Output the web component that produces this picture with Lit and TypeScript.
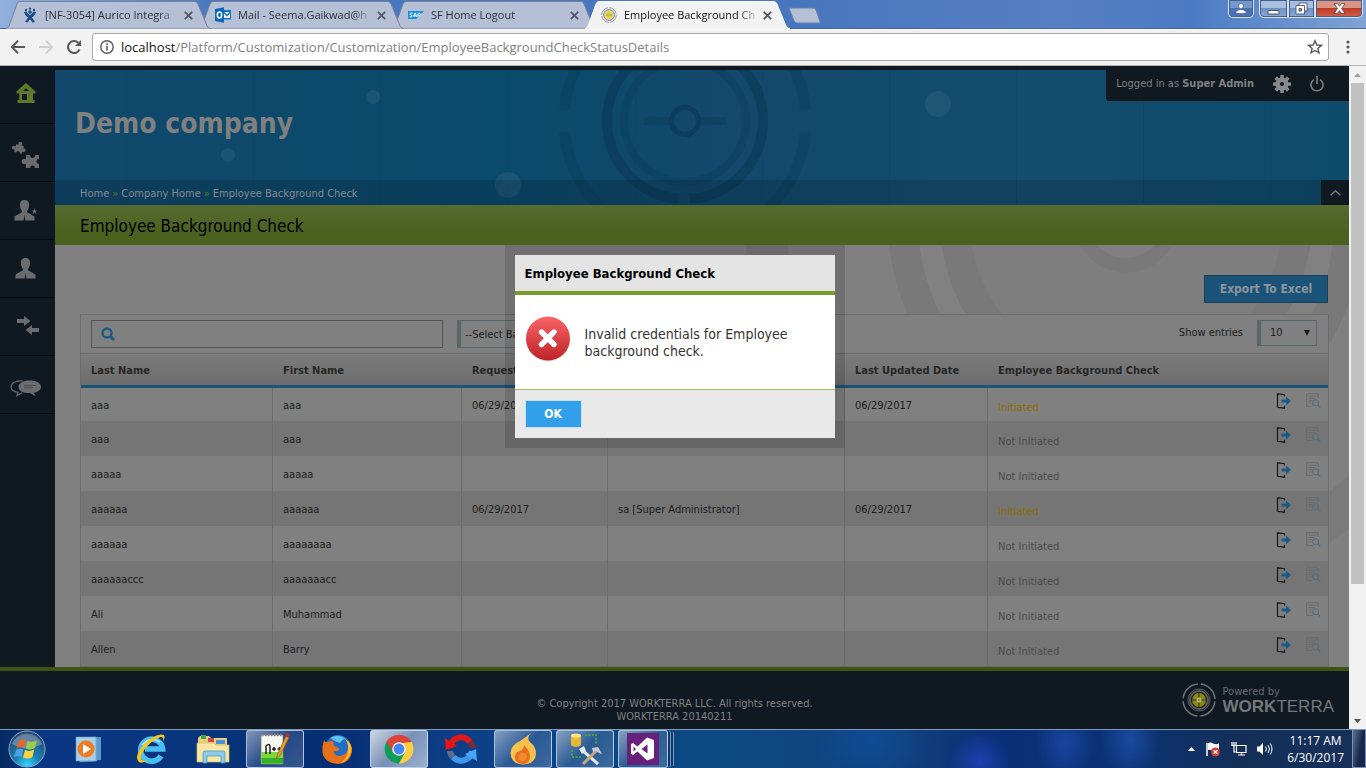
import { LitElement, html, css, svg } from "lit";
import { customElement, property } from "lit/decorators.js";
import { classMap } from "lit/directives/class-map.js";

interface Row {
  last: string;
  first: string;
  requested?: string;
  by?: string;
  updated?: string;
  initiated?: boolean;
}

const ROWS: Row[] = [
  { last: "aaa", first: "aaa", requested: "06/29/2017", by: "sa [Super Administrator]", updated: "06/29/2017", initiated: true },
  { last: "aaa", first: "aaa" },
  { last: "aaaaa", first: "aaaaa" },
  { last: "aaaaaa", first: "aaaaaa", requested: "06/29/2017", by: "sa [Super Administrator]", updated: "06/29/2017", initiated: true },
  { last: "aaaaaa", first: "aaaaaaaa" },
  { last: "aaaaaaccc", first: "aaaaaaacc" },
  { last: "Ali", first: "Muhammad" },
  { last: "Allen", first: "Barry" },
];

/* ---------- icons ---------- */

const jiraIcon = html`<svg width="16" height="16" viewBox="0 0 16 16" fill="#1f4f86">
  <circle cx="4" cy="3" r="1.2"/><circle cx="8" cy="1.6" r="1.2"/><circle cx="12" cy="3" r="1.2"/>
  <circle cx="8" cy="5" r="1.7"/>
  <path d="M2 5l2.200-.6L8 8.200l3.800-3.800L14 5c-.6 2.600-2.300 4.300-4 5.500L13 15l-2.600.6L8 12.300 5.600 15.600 3 15l3-4.500C4.300 9.300 2.600 7.600 2 5z"/>
</svg>`;

const outlookIcon = html`<svg width="16" height="16" viewBox="0 0 16 16">
  <path d="M8 3h8v9.500H8z" fill="#1273c4"/><path d="M9 5h6v6H9z" fill="#e6eef8"/>
  <path d="M9 5.500l3 3 3-3" fill="none" stroke="#1273c4" stroke-width="1.300"/>
  <path d="M0 2l9-1.800v15.600L0 14z" fill="#0a68bb"/>
  <ellipse cx="4.500" cy="8" rx="2.200" ry="2.900" fill="none" stroke="#fff" stroke-width="1.500"/>
</svg>`;

const sapIcon = html`<svg width="16" height="16" viewBox="0 0 16 16">
  <path d="M0 4h16l-7.500 8H0z" fill="#1490dc"/>
  <path d="M4.500 6.200H2.600Q1.400 6.400 2.200 7.600l1.600.7q.6 1.300-.6 1.500H1.500M5.400 10l1.400-3.800h.6L8.800 10M5.900 8.900h2.200M10 10V6.300h1.300q1.500.2 1.200 1.300-.3.900-2.300.8" fill="none" stroke="#fff" stroke-width="1"/>
</svg>`;

const targetIcon = html`<svg width="16" height="16" viewBox="0 0 16 16">
  <circle cx="8" cy="8" r="7.300" fill="none" stroke="#9b9b9b" stroke-width="1" stroke-dasharray="10.400 1"/>
  <circle cx="8" cy="8" r="5.400" fill="#d4d4d4" stroke="#8a8a8a" stroke-width="1"/>
  <circle cx="8" cy="8" r="3.500" fill="#e8dc1c"/>
  <circle cx="8" cy="8" r="1.100" fill="#fff" stroke="#9a9340" stroke-width=".7"/>
  <path d="M5 8h1.600M9.400 8H11" stroke="#8a8430" stroke-width=".8"/>
</svg>`;

const closeIcon = html`<svg width="9" height="9" viewBox="0 0 9 9"><path d="M.8.8l7.400 7.400M8.200.8L.8 8.200" stroke="#505561" stroke-width="1.700"/></svg>`;

const backIcon = (c: string, flip = false) => html`<svg width="14" height="14" viewBox="0 0 14 14">
  <path d="${flip ? "M0 7h13M7 .8L13.200 7 7 13.200" : "M14 7H1M7 .8L.8 7 7 13.200"}" fill="none" stroke="${c}" stroke-width="2"/></svg>`;

const reloadIcon = html`<svg width="14" height="14" viewBox="0 0 14 14">
  <path d="M12.600 9.300A6 6 0 1 1 11.300 2.800" fill="none" stroke="#585858" stroke-width="2"/><path d="M14 0v6H8z" fill="#585858"/></svg>`;

const infoIcon = html`<svg width="14" height="14" viewBox="0 0 14 14"><circle cx="7" cy="7" r="6.200" fill="none" stroke="#5a5a5a" stroke-width="1.400"/>
  <path d="M7 6v4.500M7 3.200v1.700" stroke="#5a5a5a" stroke-width="1.600"/></svg>`;

const starIcon = html`<svg width="16" height="16" viewBox="0 0 16 16"><path d="M8 1.700l1.800 4.300 4.600.4-3.500 3 1.100 4.500L8 11.500l-4 2.400 1.100-4.500-3.500-3 4.600-.4z" fill="none" stroke="#5a5a5a" stroke-width="1.400"/></svg>`;

const menuDots = html`<svg width="4" height="14" viewBox="0 0 4 14" fill="#5a5a5a"><circle cx="2" cy="2" r="1.600"/><circle cx="2" cy="7" r="1.600"/><circle cx="2" cy="12" r="1.600"/></svg>`;

const homeIcon = html`<svg width="20" height="24" viewBox="0 0 20 24">
  <path d="M10 0l9.500 8.400v2H17V17h1.500v3h-17v-3H3.200v-6.600H.5v-2zM6 11v6h5v-6zm1-3h6L10 5.200z" fill="#5d7a2c" fill-rule="evenodd"/></svg>`;

const puzzleIcon = html`<svg width="28" height="32" viewBox="0 0 28 32" fill="#6a6c6f">
  <g transform="rotate(14 7 12)"><path d="M3 8h8v8H3z"/><circle cx="7" cy="6.800" r="1.900"/><circle cx="1.800" cy="12" r="1.900"/><circle cx="11.800" cy="12" r="1.900"/><circle cx="7" cy="16" r="1.800" fill="#101922"/></g>
  <path d="M14 18h13v13H14z"/><circle cx="12.400" cy="24.500" r="2.700"/><circle cx="20.500" cy="18.600" r="2.500" fill="#101922"/><circle cx="26.800" cy="24.500" r="2.400" fill="#101922"/><circle cx="20.500" cy="30.800" r="2.400" fill="#101922"/></svg>`;

const manPath = svg`<path d="M10.500 0c3 0 4.800 2 4.600 5-.1 2.500-.8 4.500-2 5.800v1.400l7.400 4.400v4h-9.200l-.8-6-.8 6H.5v-4l7.400-4.400v-1.400C6.700 9.500 6 7.500 5.900 5 5.700 2 7.500 0 10.500 0z"/>`;
const manStarIcon = html`<svg width="24" height="21" viewBox="0 0 24 21" fill="#6a6c6f">${manPath}<path d="M20.500 7.600l1 2.600 2.500.1-2 1.700.7 2.500-2.200-1.400-2.200 1.400.7-2.500-2-1.700 2.500-.1z" stroke="#101922" stroke-width=".6"/></svg>`;
const manIcon = html`<svg width="21" height="21" viewBox="0 0 21 21" fill="#6a6c6f">${manPath}</svg>`;
const arrowsIcon = html`<svg width="26" height="21" viewBox="-4 0 26 21" fill="#6a6c6f"><path d="M0 3h7V0l6.500 5L7 10V7H0zM22 12h-7V9l-6.500 5 6.500 5v-3h7z"/></svg>`;
const chatIcon = html`<svg width="31" height="25" viewBox="0 -8 31 25">
  <path d="M13 1C6 .5 1 3 1 7c0 3 3 4.500 7 5.300L7 15.500l5-2.800" fill="none" stroke="#6a6c6f" stroke-width="1.200"/>
  <path d="M19.500.5C26 .5 31 3 31 7c0 3.200-3.600 5-7.500 5.700L26 16.500l-6-3.400C13 13.300 8.500 11 8.500 7S13.500.5 19.500.5z" fill="#6a6c6f"/>
  <path d="M14 5.500h12M14 7.700h9" stroke="#3c434a" stroke-width=".8"/></svg>`;

const gearIcon = html`<svg width="18" height="18" viewBox="0 0 18 18"><g fill="#87898b">
  <circle cx="9" cy="9" r="6.600"/>
  ${[0, 45, 90, 135].map((a) => svg`<rect x="7.200" y="0" width="3.600" height="18" rx=".6" transform="rotate(${a} 9 9)"/>`)}</g>
  <circle cx="9" cy="9" r="2" fill="#101820"/></svg>`;
const powerIcon = html`<svg width="14" height="16" viewBox="0 0 14 16"><path d="M4 3.600a6 6 0 1 0 6 0M7 0v8" fill="none" stroke="#7d8083" stroke-width="1.600"/></svg>`;

const searchIcon = html`<svg width="14" height="14" viewBox="0 0 14 14"><circle cx="6" cy="6" r="4.500" fill="none" stroke="#1b5a84" stroke-width="2.400"/><path d="M9 9l4 4" stroke="#1b5a84" stroke-width="3"/></svg>`;
const sendIcon = html`<svg width="16" height="16" viewBox="0 0 16 16"><path d="M8.500 3.500V1.700L1.500.8v13.500l7 .9v-2.400" fill="none" stroke="#191919" stroke-width="1.200"/>
  <path d="M5.500 6.500H10V3.500L15 8l-5 4.500v-3H5.500z" fill="#1b5a84"/></svg>`;
const reportIcon = html`<svg width="15" height="15" viewBox="0 0 15 15"><path d="M7 13.500H.7V.7h11.400V5M2.500 3.200h8M2.500 5.500h6M2.500 7.700h4M2.500 10h3" fill="none" stroke="#6b6b6b" stroke-width="1"/>
  <circle cx="9.600" cy="9.700" r="3" fill="none" stroke="#5b6c7a" stroke-width="1.100"/><path d="M11.800 11.900l2.500 2.500" stroke="#5b6c7a" stroke-width="1.400"/></svg>`;

const errorIcon = html`<svg width="46" height="46" viewBox="0 0 46 46"><defs><linearGradient id="er" x1="0" y1="0" x2="0" y2="1">
  <stop offset="0" stop-color="#fb6466"/><stop offset="1" stop-color="#bd2328"/></linearGradient></defs>
  <circle cx="23" cy="23.500" r="22" fill="#d9d9d9"/><circle cx="23" cy="22.500" r="22" fill="url(#er)"/>
  <path d="M16.500 16l12.500 12.500M29 16L16.500 28.500" stroke="#fff" stroke-width="5.400" stroke-linecap="round"/></svg>`;

const brandIcon = html`<svg width="34" height="34" viewBox="0 0 34 34" fill="none">
  <circle cx="17" cy="17" r="16" stroke="#6e7276" stroke-width="1.500" stroke-dasharray="22.100 3" stroke-dashoffset="-1.500"/>
  <circle cx="17" cy="17" r="11" stroke="#5e6266" stroke-width="1"/><circle cx="17" cy="17" r="9" stroke="#5b5b5b" stroke-width="2"/>
  <circle cx="17" cy="17" r="7" fill="#8a8a12"/><path d="M17 9v16M9 17h16" stroke="#2d3014" stroke-width="1"/>
  <circle cx="17" cy="17" r="2" fill="#8a8a12" stroke="#cfcfc0" stroke-width="1"/></svg>`;

/* Crosshair emblem of the banner. */
const emblem = (c: string) => svg`
  <g fill="none" stroke="${c}">
    <circle r="13.500" stroke-width="5"/>
    <circle r="61" stroke-width="8" opacity=".35"/>
    <circle r="78" stroke-width="10" stroke-dasharray="234 11" stroke-dashoffset="-5.500" transform="rotate(90)" opacity=".8"/>
    <circle r="121" stroke-width="11" stroke-dasharray="357 23.100" stroke-dashoffset="-11.500" opacity=".45"/>
    <path d="M-41 0h25M16 0h25" stroke-width="8" opacity=".45"/>
  </g>`;

/* ---------- taskbar icons ---------- */

const startOrb = html`<svg width="40" height="38" viewBox="0 0 40 38"><defs><radialGradient id="orb" cx=".5" cy=".95" r=".9">
  <stop offset="0" stop-color="#35d6ff"/><stop offset=".4" stop-color="#1a7fb0"/><stop offset="1" stop-color="#27486f"/></radialGradient></defs>
  <circle cx="20" cy="19" r="18" fill="url(#orb)" stroke="#8aa7c4"/>
  <path d="M5 14a16 16 0 0 1 30 0q-15 8-30 0z" fill="#fff" opacity=".28"/>
  <path d="M11.500 11q4-2.500 7.500-.6l-2 7.600q-4-1.800-7.500.4z" fill="#e9662f"/>
  <path d="M20.500 10.800q4.500 2.200 9.500-.6l-2 7.800q-4.500 2.600-9.300.4z" fill="#9bcb4a"/>
  <path d="M9 20q3.500-2.200 7.300-.5l-2 7.500q-3.500-1.800-7.500.3z" fill="#4ba3e3"/>
  <path d="M18 20q4.500 2.200 9.300-.5l-2 7.700q-4.500 2.500-9.300.3z" fill="#fcd33c"/></svg>`;

const mediaIcon = html`<svg width="28" height="28" viewBox="0 0 28 28"><path d="M8 3l18-1v23l-18 1z" fill="#5b9bcc"/><path d="M5 3l17-1v24l-17 1z" fill="#8cc0e2" stroke="#4a86b3" stroke-width=".6"/>
  <path d="M1 2h20v24H1z" fill="#a9cfe8" stroke="#5d9cc9" stroke-width=".6"/><circle cx="11" cy="14" r="8.500" fill="#f07c22"/><path d="M8 9l8 5-8 5z" fill="#fff"/></svg>`;

const ieIcon = html`<svg width="34" height="34" viewBox="0 0 34 34">
  <path d="M27 24a11 11 0 1 1 1.600-7H11" fill="none" stroke="#48bff2" stroke-width="5.600"/><path d="M8 13q8-9 18-3" fill="none" stroke="#b9ecff" stroke-width="1.500"/>
  <path d="M29 10Q33 2 27 2.500 18 3.500 9 13.500-.5 25 5 30q3 2 9-2-6 2-7-1-1-5 6-12.500Q21 6 27 5q3 0 2 5z" fill="#f8c51c"/></svg>`;

const folderIcon = html`<svg width="34" height="30" viewBox="0 0 34 30"><path d="M2 4l2-2h9l2 2h16v22H2z" fill="#e8cf7f"/><path d="M5 1h5v4H5z" fill="#35a94a"/><path d="M12 4h6v4h-6z" fill="#d34545"/><path d="M20 6h9v4h-9z" fill="#4a90d9"/>
  <path d="M1 9h17l2 2h13v17H1z" fill="#f7e6a6" stroke="#d6b860" stroke-width=".7"/><path d="M7 29V19q0-2 2-2h18q2 0 2 2v10h-4v-7H11v7z" fill="#8fcbe8" stroke="#4d9cc4" stroke-width=".8"/></svg>`;

const nppIcon = html`<svg width="32" height="34" viewBox="0 0 32 34"><path d="M2 3h22v29H2z" fill="#f4f7ee" stroke="#777" stroke-width=".8"/><path d="M2.500 20H24v12H2.500z" fill="#7fd53c"/><path d="M2.500 26H24v5.500H2.500z" fill="#37ae2c"/>
  <path d="M3 3h20" stroke="#888" stroke-width="2.500" stroke-dasharray="1.500 1.500"/>
  <path d="M7 22v-8q3-3 4 0v8M13 17h4M15 15v4M18.500 17h4M20.500 15v4" stroke="#222" stroke-width="1.500" fill="none"/>
  <path d="M17 27l2-6L27 4l3 1.500L21.500 23z" fill="#e59a2e" stroke="#8c5a18" stroke-width=".6"/><path d="M26 4l1.500-3 3.500 1.500L29.800 6z" fill="#b63131"/></svg>`;

const firefoxIcon = html`<svg width="32" height="32" viewBox="0 0 32 32"><circle cx="17" cy="15" r="13" fill="#1f6fc4"/><path d="M9 5q8-5 16 1-4 0-6 4-6-2-10-5z" fill="#5ec1ee"/>
  <path d="M3 7q1 3 4 2 3-2 6 0-2 3 2 5 4 1 3 3-3 2-5 1-1 4 5 5 7 0 9-7 1-6-3-10 8 4 7 13-2 11-14 12Q3 30 1.500 19 1 12 3 7z" fill="#e8701a"/><path d="M24 6q8 5 6 13-3 9-10 11 7-6 7-12 1-7-3-12z" fill="#fbc02d"/></svg>`;

const chromeIcon = html`<svg width="30" height="30" viewBox="-15 -15 30 30"><path d="M0 0L-12.500-7.200A14.500 14.500 0 0 1 12.500-7.200z" fill="#db4437"/><path d="M-12.500-7.200A14.500 14.500 0 0 0 0 14.500L6.500 3 0 0z" fill="#0f9d58"/>
  <path d="M12.700-7A14.500 14.500 0 0 1 0 14.500L6.500 3 3-6z" fill="#ffcd40"/><path d="M-12.500-7.200L-6 3.500 0 0V-7H12.600z" fill="#db4437"/><circle r="6.800" fill="#f1f1f1"/><circle r="5.400" fill="#4285f4"/></svg>`;

const syncIcon = html`<svg width="32" height="32" viewBox="0 0 32 32" fill="none"><path d="M5 15A11 11 0 0 1 25 9" stroke="#e01818" stroke-width="6"/><path d="M25 9q3 3 3 6" stroke="#7a2c34" stroke-width="6"/>
  <path d="M27 18A11 11 0 0 1 8 24" stroke="#3f97ea" stroke-width="6"/><path d="M8 24q-3-3-3-6" stroke="#5d6c82" stroke-width="6"/><path d="M0 5l1 12 11-4z" fill="#f01010"/><path d="M32 28l-1-12-11 5z" fill="#4aa5f5"/></svg>`;

const flameIcon = html`<svg width="28" height="32" viewBox="0 0 28 32"><path d="M22 0q-5 5-1 9 6 5 6 11 0 11-13 11.500Q2 31 1.500 20 2 12 11 8q6-4 11-8z" fill="#f8c14e"/><path d="M15 12q6 6 6 11 0 7-6 8-9 0-9-7 0-5 5-6 4-2 4-6z" fill="#e8701c"/><path d="M12 20q5-1 6 3-1 5-5 5-4-1-4-4 1-3 3-4z" fill="#f08a2c"/></svg>`;

const toolsIcon = html`<svg width="34" height="34" viewBox="0 0 34 34"><path d="M3 3v10q5 4 10 0V3z" fill="#e9b736"/><ellipse cx="8" cy="3.500" rx="5" ry="2" fill="#fbe38c"/>
  <path d="M17 3h11v9M4 18v7h10" stroke="#4eb52c" stroke-width="1.500" stroke-dasharray="2 1.500" fill="none"/>
  <path d="M14 18l16 14" stroke="#dfe6ec" stroke-width="3"/><path d="M28 19L15 32" stroke="#c9a77d" stroke-width="3"/><path d="M11 17l5-3 2 5-4 3z" fill="#e8edf2"/><path d="M24 16l6-1 4 7-3-1-3-2-3 1z" fill="#c3ccd6"/></svg>`;

const vsIcon = html`<svg width="32" height="32" viewBox="0 0 32 32"><path d="M0 0h32v32H0z" fill="#68217a"/><path d="M20 4.500l7 2.500v18l-7 2.500L10.500 18.500 6 22l-2-1.200v-9.600L6 10l4.500 3.500zM6.500 13.500v5L9 16zM20.500 11.500L14.500 16l6 4.500z" fill="#fff" fill-rule="evenodd"/></svg>`;

/* ---------- window frame with tabs and address bar ---------- */

@customElement("browser-chrome")
class BrowserChrome extends LitElement {
  static styles = css`
    :host { display: block; font-family: "Open Sans", "Noto Sans", sans-serif; }
    button { font: inherit; border: 0; padding: 0; background: none; display: grid; place-items: center; }
    svg { display: block; }
    .strip {
      display: flex; height: 29px; box-sizing: border-box; padding-left: 6px; border-bottom: 1px solid #46669c;
      background: linear-gradient(90deg, #92b0de 0, #4a78c0 210px, #4776be 780px, #567fc2 1060px, #4b7ac4 1190px, #7fa3d4 100%);
    }
    .tabs { display: flex; height: 29px; isolation: isolate; }
    .tab { position: relative; width: 205px; height: 29px; margin-right: -12px; flex: none; }
    .tab .shape { position: absolute; inset: 0; z-index: -1; }
    .tab1 { z-index: 3; } .tab2 { z-index: 2; } .tab3 { z-index: 1; } .active { z-index: 4; }
    .inner { display: flex; align-items: center; height: 100%; padding: 1px 18px 0 16px; box-sizing: border-box; }
    .title { flex: 1; margin-left: 7px; font-size: 11px; line-height: 20px; color: #2b303b; white-space: nowrap;
      -webkit-mask-image: linear-gradient(90deg, #000 85%, transparent); mask-image: linear-gradient(90deg, #000 85%, transparent); }
    .active .title { color: #111; }
    .inner button { margin-left: 4px; }
    .newtab { margin: 7px 0 0 10px; height: 17px; }
    .controls { margin-left: auto; display: flex; margin-right: 3px; height: 18px; }
    .controls button { border: 1px solid #d8e4f4; border-top: 0; box-shadow: inset 0 0 0 1px #44608f; background: linear-gradient(#a7bfdf 50%, #6f92c6 50%, #89a9d6); height: 18px; box-sizing: border-box; }
    .controls .user { width: 26px; margin-right: 5px; border-radius: 0 0 5px 5px; background: linear-gradient(#7497ce 45%, #4b71b2 45%); }
    .controls .min { width: 29px; border-radius: 0 0 0 5px; }
    .controls .max { width: 27px; }
    .controls .close { width: 48px; border-radius: 0 0 5px 0; background: linear-gradient(#d99484 45%, #bd3621 45%, #d0604c); }
    .bar { display: flex; align-items: center; height: 37px; box-sizing: border-box; padding: 0 16px 1px 11px; background: #f2f2f2; border-bottom: 1px solid #b3b3b3; border-top: 1px solid #f8f8f8; }
    .bar > button { width: 14px; height: 14px; margin-right: 14px; }
    .bar .reload { margin-right: 11px; }
    .omni { flex: 1; display: flex; align-items: center; height: 28px; box-sizing: border-box; border: 1px solid #a9a9a9; border-radius: 3px; background: #fff; padding: 0 5px 0 7px; }
    .url { flex: 1; margin-left: 7px; font-size: 13px; line-height: 20px; color: #808080; }
    .url b { font-weight: 400; color: #111; }
    .bar .more { width: 4px; margin: 0 0 0 17px; }
  `;

  private tab(n: number, icon: unknown, title: string, active = false) {
    return html`<div class=${classMap({ tab: true, active, [`tab${n}`]: true })}>
      <svg class="shape" width="205" height="29" viewBox="0 0 205 29">
        <path d="M0 29Q2 28 3 26L11 4Q12 1.500 14 1.500H189Q191 1.500 192 4L201 26Q202 28 205 29Z" fill=${active ? "#f2f2f2" : "#b5c0d6"} stroke=${active ? "#f8f8f8" : "#77839a"} stroke-width="1"/>
      </svg>
      <div class="inner">${icon}<span class="title">${title}</span><button aria-label="Close tab">${closeIcon}</button></div>
    </div>`;
  }

  render() {
    return html`
      <div class="strip">
        <div class="tabs">
          ${this.tab(1, jiraIcon, "[NF-3054] Aurico Integra")}
          ${this.tab(2, outlookIcon, "Mail - Seema.Gaikwad@h")}
          ${this.tab(3, sapIcon, "SF Home Logout")}
          ${this.tab(4, targetIcon, "Employee Background Ch", true)}
        </div>
        <button class="newtab" aria-label="New tab"><svg width="34" height="17" viewBox="0 0 34 17"><path d="M1 1h24q2 0 3 2l4.500 13H9q-2 0-3-2z" fill="#b5c0d6" stroke="#667ea8"/></svg></button>
        <div class="controls">
          <button class="user" aria-label="Profile"><svg width="12" height="12" viewBox="0 0 12 12" fill="#fff" stroke="#3d5582" stroke-width=".6"><circle cx="6" cy="3" r="2.500"/><path d="M1 10.500V8.500Q6 4.500 11 8.500v2z"/></svg></button>
          <button class="min" aria-label="Minimize"><svg width="13" height="12" viewBox="0 0 13 12"><path d="M1 7.500h11v3.500H1z" fill="#fff" stroke="#4a5670"/></svg></button>
          <button class="max" aria-label="Restore"><svg width="13" height="13" viewBox="0 0 13 13" fill="#fff" stroke="#4a5670" stroke-width=".9"><path d="M4 1h8v8H4z"/><path d="M1 3.500h8.500V12H1z"/><path d="M4 6.500h2.500V9H4z" fill="#6f92c6"/></svg></button>
          <button class="close" aria-label="Close"><svg width="13" height="11" viewBox="0 0 13 11"><path d="M1 .7h3.600l1.900 2.600L8.400.7H12L8.500 5.500l3.500 4.800H8.400L6.500 7.700l-1.900 2.600H1l3.500-4.800z" fill="#fff" stroke="#5b4350" stroke-width=".8"/></svg></button>
        </div>
      </div>
      <div class="bar">
        <button aria-label="Back">${backIcon("#585858")}</button>
        <button aria-label="Forward">${backIcon("#d0d0d0", true)}</button>
        <button class="reload" aria-label="Reload">${reloadIcon}</button>
        <div class="omni">${infoIcon}<span class="url"><b>localhost</b>/Platform/Customization/Customization/EmployeeBackgroundCheckStatusDetails</span>${starIcon}</div>
        <button class="more" aria-label="Menu">${menuDots}</button>
      </div>`;
  }
}

/* ---------- error dialog ---------- */

@customElement("error-dialog")
class ErrorDialog extends LitElement {
  @property() heading = "";
  @property() message = "";

  static styles = css`
    :host { display: block; box-sizing: border-box; width: 340px; border: 10px solid rgba(0, 0, 0, 0.125); font-family: "DejaVu Sans Condensed", "DejaVu Sans", sans-serif; }
    .head { height: 36px; padding: 0 10px; background: #e4e4e4; border-bottom: 4px solid #7a9a2d; }
    h2 { margin: 0; font-size: 13px; line-height: 38px; font-weight: 700; color: #000; }
    .body { display: flex; background: #fff; padding: 21px 10px 27px; border-bottom: 1px solid #9bc45c; }
    .body p { margin: 10px 0 0; padding: 0 14px; font-size: 14px; line-height: 17px; color: #333; }
    svg { flex: none; }
    .foot { background: #e9e9e9; padding: 10px; }
    button { display: block; box-sizing: border-box; height: 28px; width: 57px; border: 1px solid #cfe0ec; background: #319fe9; color: #fff; font: 700 12px/26px "DejaVu Sans Condensed", "DejaVu Sans", sans-serif; padding: 0; }
  `;

  render() {
    return html`<div role="dialog" aria-labelledby="t">
      <div class="head"><h2 id="t">${this.heading}</h2></div>
      <div class="body">${errorIcon}<p>${this.message}</p></div>
      <div class="foot"><button>OK</button></div>
    </div>`;
  }
}

/* ---------- employee table ---------- */

@customElement("employee-table")
class EmployeeTable extends LitElement {
  static styles = css`
    :host { display: block; border: 1px solid #6c6c6c; background: #808080; }
    svg { display: block; }
    .filters { display: flex; align-items: center; height: 38px; padding: 0 11px 0 10px; border-bottom: 1px solid #6c6c6c; }
    .search { display: flex; align-items: center; box-sizing: border-box; width: 352px; height: 28px; border: 1px solid #555; padding-left: 9px; }
    input { flex: 1; min-width: 0; border: 0; outline: 0; background: none; font: inherit; padding: 0 8px; }
    select { appearance: none; box-sizing: border-box; font: inherit; color: #222; background: #808080; border: 1px solid #596669; border-left-width: 4px; border-radius: 0; outline: 0; }
    .status { width: 260px; height: 28px; margin-left: 14px; padding: 0 4px; }
    .count { margin-left: auto; margin-bottom: 3px; display: flex; align-items: center; gap: 14px; color: #1c1c1c; }
    .pick { display: grid; align-items: center; }
    .pick > * { grid-area: 1 / 1; }
    .count select { width: 60px; height: 26px; padding: 0 9px; }
    .pick svg { justify-self: end; margin-right: 7px; }
    table { width: 100%; border-collapse: separate; border-spacing: 0; table-layout: fixed; }
    .c1 { width: 192px; } .c2 { width: 189px; } .c3 { width: 146px; } .c4 { width: 237px; } .c5 { width: 143px; }
    th { height: 29px; padding: 2px 10px 0; text-align: left; font-weight: 700; color: #272727; background: linear-gradient(#7c7c7c, #6c6c6c); border-bottom: 3px solid #1b5379; }
    td { height: 33px; padding: 2px 10px 0; border-right: 1px solid #6c6c6c; color: #1c1c1c; }
    td:last-child { border-right: 0; padding-right: 7px; }
    tr:first-child td { height: 31px; }
    tbody tr:nth-child(even) { background: #757575; }
    .state { display: flex; align-items: center; }
    .label { color: #4b4b4b; padding-top: 4px; }
    .on .label { color: #8c6d00; }
    .acts { margin-left: auto; display: flex; gap: 15px; padding-bottom: 10px; }
    button { border: 0; background: none; padding: 0; display: block; width: 15px; height: 16px; }
  `;

  render() {
    return html`
      <div class="filters">
        <div class="search">${searchIcon}<input type="text" aria-label="Search"></div>
        <select class="status" aria-label="Background check status"><option>--Select Background Check Status--</option></select>
        <div class="count"><label for="n">Show entries</label>
          <span class="pick"><select id="n"><option>10</option></select><svg width="6" height="6" viewBox="0 0 6 6"><path d="M0 0h6L3 6z" fill="#1c1c1c"/></svg></span></div>
      </div>
      <table>
        <colgroup><col class="c1"><col class="c2"><col class="c3"><col class="c4"><col class="c5"><col></colgroup>
        <thead><tr><th>Last Name</th><th>First Name</th><th>Requested Date</th><th>Requested By</th><th>Last Updated Date</th><th>Employee Background Check</th></tr></thead>
        <tbody>${ROWS.map((r) => html`<tr>
          <td>${r.last}</td><td>${r.first}</td><td>${r.requested}</td><td>${r.by}</td><td>${r.updated}</td>
          <td><div class=${classMap({ state: true, on: !!r.initiated })}>
            <span class="label">${r.initiated ? "Initiated" : "Not Initiated"}</span>
            <span class="acts"><button aria-label="Send">${sendIcon}</button><button aria-label="View report">${reportIcon}</button></span>
          </div></td></tr>`)}
        </tbody>
      </table>`;
  }
}

/* ---------- desktop taskbar ---------- */

@customElement("task-bar")
class TaskBar extends LitElement {
  static styles = css`
    :host { display: flex; align-items: center; height: 39px; box-sizing: border-box; border-top: 1px solid #7f9cbb; font-family: "Open Sans", "Noto Sans", sans-serif;
      background:
        radial-gradient(ellipse 30px 40px at 1130px 10px, #1a4aa0 0, transparent 100%),
        radial-gradient(ellipse 30px 40px at 1065px 12px, #1846a0 0, transparent 100%),
        radial-gradient(ellipse 60px 50px at 870px 10px, #0f4c94 0, transparent 100%),
        radial-gradient(ellipse 30px 30px at 980px 32px, #1b3fae 0, transparent 100%),
        linear-gradient(90deg, #062a62 0, #0b3684 40px, #08357c 190px, #062e72 330px, #0c3f88 460px, #0d4a82 720px, #123f7c 900px, #0a2f78 1000px, #0b3272 1130px, #132f58 1240px, #16305a 1340px); }
    button { border: 0; background: none; padding: 0; display: grid; place-items: center; box-sizing: border-box; height: 38px; }
    svg { display: block; }
    .start { width: 54px; margin-right: 6px; }
    .apps { display: flex; gap: 4px; }
    .apps button { width: 58px; }
    .apps .open { border: 1px solid rgba(210, 225, 240, 0.75); border-radius: 3px; background: linear-gradient(135deg, rgba(255,255,255,.5), rgba(255,255,255,.12) 50%, rgba(255,255,255,.2)); }
    .apps .front { background: linear-gradient(135deg, rgba(255,255,255,.8), rgba(255,255,255,.45) 50%, rgba(255,255,255,.6)); }
    .apps .stack { width: 50px; box-shadow: 3px 0 0 -1px #0b3672, 4px 0 0 -1px #7f9cbb, 7px 0 0 -2px #0b3672, 8px 0 0 -2px #7f9cbb; }
    .tray { margin-left: auto; display: flex; align-items: center; gap: 10px; }
    .clock { color: #fff; font-size: 12px; line-height: 17px; text-align: center; margin: 0 8px 0 4px; }
    .peek { width: 14px; border: 1px solid #8091ad; border-top: 0; background: linear-gradient(100deg, #5a7090, #16264f 60%); }
  `;

  render() {
    const apps: [string, unknown, string][] = [
      ["Media Player", mediaIcon, ""], ["Internet Explorer", ieIcon, ""], ["Explorer", folderIcon, ""], ["Notepad++", nppIcon, "open"],
      ["Firefox", firefoxIcon, ""], ["Chrome", chromeIcon, "open front"], ["Sync", syncIcon, ""], ["Flame", flameIcon, "open"],
      ["Database tools", toolsIcon, "open"], ["Visual Studio", vsIcon, "open stack"],
    ];
    return html`
      <button class="start" aria-label="Start">${startOrb}</button>
      <div class="apps">${apps.map(([n, i, c]) => html`<button class=${c} aria-label=${n}>${i}</button>`)}</div>
      <div class="tray">
        <svg width="7" height="4" viewBox="0 0 7 4"><path d="M0 4h7L3.500 0z" fill="#fff"/></svg>
        <svg width="16" height="15" viewBox="0 0 16 15"><path d="M2 1v13" stroke="#fff" stroke-width="1.500"/><path d="M3 1q3-1 5 .5 3 1.500 6 0v7q-3 1-6 0-2-1-5-.5z" fill="#fff"/><circle cx="10.500" cy="10" r="4.500" fill="#d93a2c"/><path d="M8.700 8.200l3.600 3.600M12.300 8.200l-3.600 3.600" stroke="#fff" stroke-width="1.400"/></svg>
        <svg width="16" height="14" viewBox="0 0 16 14" fill="none" stroke="#fff"><path d="M5.500 3.500H15v7H5.500zM7 13h7M10.500 10.500V13" stroke-width="1.200"/><path d="M1 0v3.500h4V0M3 0v10h2" stroke-width="1.200"/></svg>
        <svg width="16" height="14" viewBox="0 0 16 14"><path d="M0 4.500h2.500L6 1v12L2.500 9.500H0z" fill="#fff"/><path d="M8.500 4.500q2 2.500 0 5M11 3q3 4 0 8M13.200 1.500q3.600 5.500 0 11" fill="none" stroke="#fff" stroke-width="1"/></svg>
        <div class="clock">11:17 AM<br>6/30/2017</div>
      </div>
      <button class="peek" aria-label="Show desktop"></button>`;
  }
}

@customElement("app-root")
class AppRoot extends LitElement {
  static styles = css`
    :host { display: flex; flex-direction: column; height: 100vh; overflow: hidden; font: 11px/17px "DejaVu Sans Condensed", "DejaVu Sans", sans-serif; }
    svg { display: block; }
    .view { flex: 1; min-height: 0; display: flex; position: relative; }
    .page { flex: 1; min-width: 0; display: flex; flex-direction: column; position: relative; background: #101922; }
    .scroll { width: 17px; background: #f1f1f1; display: flex; flex-direction: column; align-items: center; justify-content: space-between; box-sizing: border-box; padding: 7px 0 6px; }
    .thumb { width: 13px; height: 501px; margin-top: 6px; margin-bottom: auto; background: #c1c1c1; }
    .main { flex: 1; min-height: 0; display: flex; }
    .side { width: 55px; flex: none; background: #101922; }
    .side a { display: grid; place-items: center; height: 57px; padding-right: 4px; border-bottom: 1px solid #060b11; }
    .content { flex: 1; min-width: 0; display: flex; flex-direction: column; padding-top: 4px; }
    .banner { position: relative; height: 135px; flex: none; display: flex; flex-direction: column; justify-content: flex-end;
      background: linear-gradient(90deg, #11486b 0, #0a4a6c 450px, #11486b 640px, #154d6e 950px, #0e4a6c 100%); }
    .art { position: absolute; inset: 0; width: 100%; height: 100%; }
    .banner h1 { position: relative; margin: 0; padding: 0 20px; font-size: 28px; line-height: 34px; font-weight: 700; color: #808080; }
    .account { position: absolute; right: 0; top: -4px; height: 35px; display: flex; align-items: center; padding: 0 25px 0 10px; background: #101820; color: #808080; border-bottom-left-radius: 3px; }
    .account button { border: 0; background: none; padding: 0; margin-left: 19px; }
    .crumbs { position: relative; margin-top: 39px; height: 25px; line-height: 27px; display: flex; gap: 3px; padding-left: 25px; background: rgba(0, 0, 0, 0.14); color: #5d7a2c; }
    .crumbs a { color: #868a8d; text-decoration: none; }
    .crumbs button { margin-left: auto; width: 28px; height: 25px; border: 0; padding: 0; background: #101820; display: grid; place-items: center; }
    .title { flex: none; height: 40px; padding-left: 25px; background: linear-gradient(#566b30, #4b611e 70%); }
    .title h2 { margin: 0; font-size: 17px; line-height: 43px; font-weight: 400; color: #000; }
    .body { flex: 1; min-height: 0; overflow: hidden; background: #808080; padding: 30px 20px 0 25px; position: relative; display: flex; flex-direction: column; }
    .mark { position: absolute; right: 0; top: 0; }
    .export { position: relative; align-self: flex-end; margin: 0 1px 11px; width: 124px; height: 28px; border: 1px solid #18425c; background: #1a5278; color: #8b959b; font: 700 12px/20px "DejaVu Sans Condensed", "DejaVu Sans", sans-serif; padding: 0; flex: none; }
    employee-table { position: relative; flex: none; }
    footer { flex: none; box-sizing: border-box; height: 62px; border-top: 4px solid #3e5314; display: grid; grid-template-columns: 1fr auto 1fr; align-items: center; color: #808080; }
    .copy { grid-column: 2; text-align: center; line-height: 13px; padding-top: 20px; }
    .brand { justify-self: end; display: flex; align-items: center; gap: 7px; padding-right: 15px; }
    .brand p { margin: 0; line-height: 14px; color: #666a6e; }
    .brand strong { display: block; font: 700 17px/16px "Liberation Sans", Arial, sans-serif; color: #74777a; }
    .brand strong span { font-weight: 400; }
    error-dialog { position: absolute; left: calc((100% - 340px) / 2); top: 179px; }
  `;

  render() {
    return html`
      <browser-chrome></browser-chrome>
      <div class="view">
        <div class="page">
          <div class="main">
            <nav class="side">
              ${[["Home", homeIcon], ["Setup", puzzleIcon], ["Favourites", manStarIcon], ["Employees", manIcon], ["Transfer", arrowsIcon], ["Messages", chatIcon]].map(
                ([n, i]) => html`<a href="#" aria-label=${n}>${i}</a>`)}
            </nav>
            <div class="content">
              <header class="banner">
                <svg class="art" viewBox="0 0 1294 135" preserveAspectRatio="xMidYMid slice">
                  ${[71, 198, 325, 453, 580, 707, 834, 961, 1088, 1215].map((x) => svg`<path d="M${x}.500 0v135" stroke="#0c4060" opacity=".3"/>`)}
                  <g fill="#2a5f7e" opacity=".5"><circle cx="318" cy="27" r="7"/><circle cx="173" cy="85" r="7"/><circle cx="453" cy="115" r="13"/><circle cx="883" cy="34" r="13"/></g>
                  <g transform="translate(630 51)">${emblem("#0c3d5c")}</g>
                </svg>
                <h1>Demo company</h1>
                <div class="crumbs"><a href="#">Home</a>»<a href="#">Company Home</a>»<a href="#">Employee Background Check</a>
                  <button aria-label="Collapse"><svg width="11" height="6" viewBox="0 0 11 6"><path d="M.7 5.300l4.800-4.600 4.800 4.600" fill="none" stroke="#808080" stroke-width="1.200"/></svg></button></div>
                <div class="account"><span>Logged in as <b>Super Admin</b></span>
                  <button aria-label="Settings">${gearIcon}</button><button aria-label="Log out">${powerIcon}</button></div>
              </header>
              <div class="title"><h2>Employee Background Check</h2></div>
              <div class="body">
                <svg class="mark" width="610" height="422" viewBox="0 0 610 422">
                  <g transform="translate(387 -25)"><circle r="238" fill="#7e7e7e"/><g fill="none" stroke="#797979">
                    <circle r="45" stroke-width="15"/><circle r="171" stroke-width="30"/><circle r="223" stroke-width="30"/><circle r="360" stroke-width="42" stroke="#7a7a7a"/>
                    <circle r="197" stroke="#818181" stroke-width="22"/><circle r="38" stroke="none" fill="#808080"/></g></g>
                </svg>
                <button class="export">Export To Excel</button>
                <employee-table></employee-table>
              </div>
            </div>
          </div>
          <footer>
            <div class="copy">© Copyright 2017 WORKTERRA LLC. All rights reserved.<br>WORKTERRA 20140211</div>
            <div class="brand">${brandIcon}<p>Powered by<strong>WORK<span>TERRA</span></strong></p></div>
          </footer>
          <error-dialog heading="Employee Background Check" message="Invalid credentials for Employee background check."></error-dialog>
        </div>
        <div class="scroll">
          <svg width="7" height="4" viewBox="0 0 7 4"><path d="M0 4h7L3.500 0z" fill="#a0a0a0"/></svg>
          <div class="thumb"></div>
          <svg width="7" height="4" viewBox="0 0 7 4"><path d="M0 0h7L3.500 4z" fill="#505050"/></svg>
        </div>
      </div>
      <task-bar></task-bar>`;
  }
}
